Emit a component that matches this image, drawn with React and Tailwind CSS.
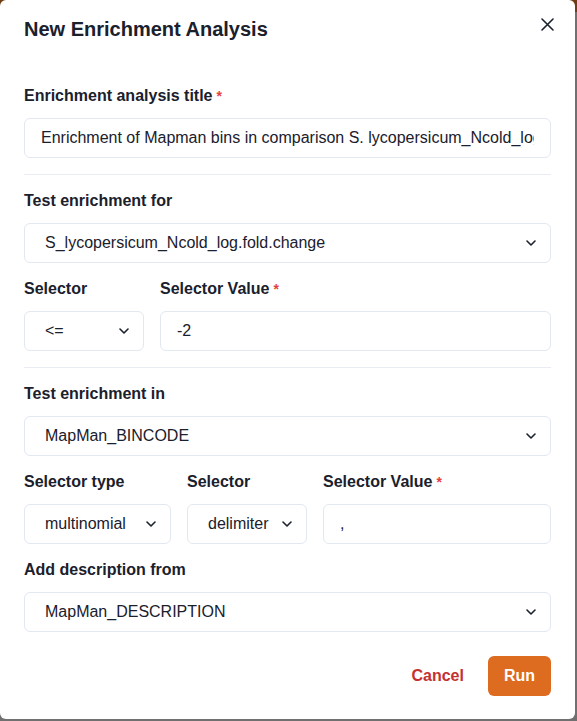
import React from "react";

const font = { fontFamily: '"Liberation Sans", Arial, sans-serif' };

function Label({ children, required }) {
  return (
    <div className="text-[16px] leading-6 font-bold text-[#1a202c] mb-2.5 whitespace-nowrap">
      {children}
      {required && <span className="text-[#e53e3e] ml-1 text-[14px]">*</span>}
    </div>
  );
}

function Chevron() {
  return (
    <svg width="10" height="6" viewBox="0 0 10 6" fill="none" className="shrink-0">
      <path d="M1 1l4 4 4-4" stroke="#1a202c" strokeWidth="1.6" strokeLinecap="round" strokeLinejoin="round" />
    </svg>
  );
}

function Select({ value }) {
  return (
    <div className="h-10 w-full border border-[#e2e8f0] rounded-md flex items-center pl-5 pr-[14px] text-[16px] text-[#1a202c]">
      <span className="flex-1 whitespace-nowrap overflow-hidden">{value}</span>
      <Chevron />
    </div>
  );
}

function Input({ value }) {
  return (
    <div className="h-10 w-full border border-[#e2e8f0] rounded-md flex items-center px-4 text-[16px] text-[#1a202c]">
      <span className="flex-1 overflow-hidden whitespace-nowrap">{value}</span>
    </div>
  );
}

function Divider() {
  return <div className="h-px bg-[#e9edf3] mt-4 mb-[14px]" />;
}

export default function App() {
  return (
    <div
      className="w-[577px] h-[721px] bg-[linear-gradient(to_bottom,#6e3d14_12px,#707070_12px)]"
      style={font}
    >
      <div className="relative w-[575px] h-[719px] bg-white rounded-md px-6">
        <div className="pt-[14px] text-[20px] leading-[30px] font-bold text-[#1a202c]">
          New Enrichment Analysis
        </div>
        <button className="absolute top-2 right-3 w-8 h-8 flex items-center justify-center">
          <svg width="13" height="13" viewBox="0 0 13 13" fill="none">
            <path d="M1 1l11 11M12 1L1 12" stroke="#1a202c" strokeWidth="1.6" strokeLinecap="round" />
          </svg>
        </button>

        <div className="mt-10">
          <Label required>Enrichment analysis title</Label>
          <Input value="Enrichment of Mapman bins in comparison S. lycopersicum_Ncold_log.fold.change" />
        </div>

        <Divider />

        <Label>Test enrichment for</Label>
        <Select value="S_lycopersicum_Ncold_log.fold.change" />

        <div className="flex gap-4 mt-[14px]">
          <div className="w-[120px]">
            <Label>Selector</Label>
            <Select value="<=" />
          </div>
          <div className="flex-1">
            <Label required>Selector Value</Label>
            <Input value="-2" />
          </div>
        </div>

        <Divider />

        <Label>Test enrichment in</Label>
        <Select value="MapMan_BINCODE" />

        <div className="flex gap-4 mt-[14px]">
          <div className="w-[147px]">
            <Label>Selector type</Label>
            <Select value="multinomial" />
          </div>
          <div className="w-[120px]">
            <Label>Selector</Label>
            <Select value="delimiter" />
          </div>
          <div className="flex-1">
            <Label required>Selector Value</Label>
            <Input value="," />
          </div>
        </div>

        <div className="mt-[14px]">
          <Label>Add description from</Label>
          <Select value="MapMan_DESCRIPTION" />
        </div>

        <div className="flex justify-end items-center gap-2 mt-6">
          <button className="h-10 px-4 text-[16px] font-bold text-[#c53030] rounded-md">Cancel</button>
          <button className="h-10 px-4 text-[16px] font-bold text-white bg-[#dd6b20] rounded-md">Run</button>
        </div>
      </div>
    </div>
  );
}
